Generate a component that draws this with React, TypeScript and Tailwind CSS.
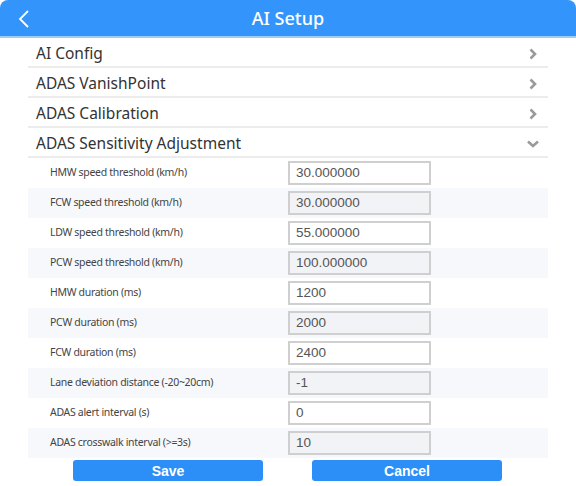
import React from 'react';

type Field = { label: string; value: string; readOnly?: boolean };

const fields: Field[] = [
  { label: 'HMW speed threshold (km/h)', value: '30.000000' },
  { label: 'FCW speed threshold (km/h)', value: '30.000000', readOnly: true },
  { label: 'LDW speed threshold (km/h)', value: '55.000000' },
  { label: 'PCW speed threshold (km/h)', value: '100.000000', readOnly: true },
  { label: 'HMW duration (ms)', value: '1200' },
  { label: 'PCW duration (ms)', value: '2000', readOnly: true },
  { label: 'FCW duration (ms)', value: '2400' },
  { label: 'Lane deviation distance (-20~20cm)', value: '-1', readOnly: true },
  { label: 'ADAS alert interval (s)', value: '0' },
  { label: 'ADAS crosswalk interval (>=3s)', value: '10', readOnly: true },
];

const menus = ['AI Config', 'ADAS VanishPoint', 'ADAS Calibration'];

const ChevronRight = () => (
  <svg width="10" height="14" viewBox="0 0 10 14" className="text-[#9a9a9a] mt-[4px]">
    <polyline points="2.5,2.5 7,7 2.5,11.5" fill="none" stroke="currentColor" strokeWidth="2.6" />
  </svg>
);

const ChevronDown = () => (
  <svg width="14" height="10" viewBox="0 0 14 10" className="text-[#9a9a9a] mt-[4px]">
    <polyline points="2,2.5 7,7 12,2.5" fill="none" stroke="currentColor" strokeWidth="2.6" />
  </svg>
);

export default function App() {
  return (
    <div className="w-[576px] h-[486px] bg-white overflow-hidden font-['Noto_Sans',sans-serif]">
      <header className="relative h-[36px] bg-[#3395fb] rounded-t-[8px] flex items-center justify-center border-b-2 border-[#9fcbf6] box-content">
        <svg width="14" height="20" viewBox="0 0 14 20" className="absolute left-[17px] top-[9px]">
          <polyline points="11,2 3,10 11,18" fill="none" stroke="white" strokeWidth="1.8" />
        </svg>
        <h1 className="text-white text-[18px] font-medium leading-none">AI Setup</h1>
      </header>

      <div className="mx-[28px]">
        {menus.map((m) => (
          <div key={m} className="h-[30px] flex items-center justify-between pl-[8px] pr-[10px] border-b-2 border-[#ececec]">
            <span className="text-[15.5px] text-[#333] pt-[4px]">{m}</span>
            <ChevronRight />
          </div>
        ))}
        <div className="h-[30px] flex items-center justify-between pl-[8px] pr-[8px] border-b-2 border-[#ececec]">
          <span className="text-[15.5px] text-[#333] pt-[4px]">ADAS Sensitivity Adjustment</span>
          <ChevronDown />
        </div>

        {fields.map((f, i) => (
          <div
            key={f.label}
            className={`h-[30px] flex items-center pb-[1px] ${i % 2 === 1 ? 'bg-[#f7f8fc]' : 'bg-white'}`}
          >
            <span className="w-[260px] pl-[22px] pt-[1px] text-[10.5px] tracking-[-0.3px] text-[#444]">{f.label}</span>
            <input
              readOnly
              value={f.value}
              className={`w-[143px] h-[24px] px-[6px] border-2 border-[#cfcfcf] outline-none text-[13.5px] text-[#555] font-['Liberation_Sans',sans-serif] ${f.readOnly ? 'bg-[#f2f3f7]' : 'bg-white'}`}
            />
          </div>
        ))}
      </div>

      <div className="flex pl-[73px] gap-[49px] mt-[2px]">
        <button className="w-[190px] h-[21px] rounded-[3px] bg-[#2b8ff7] text-white font-bold text-[14px] leading-none font-['Liberation_Sans',sans-serif]">
          Save
        </button>
        <button className="w-[190px] h-[21px] rounded-[3px] bg-[#2b8ff7] text-white font-bold text-[14px] leading-none font-['Liberation_Sans',sans-serif]">
          Cancel
        </button>
      </div>
    </div>
  );
}
